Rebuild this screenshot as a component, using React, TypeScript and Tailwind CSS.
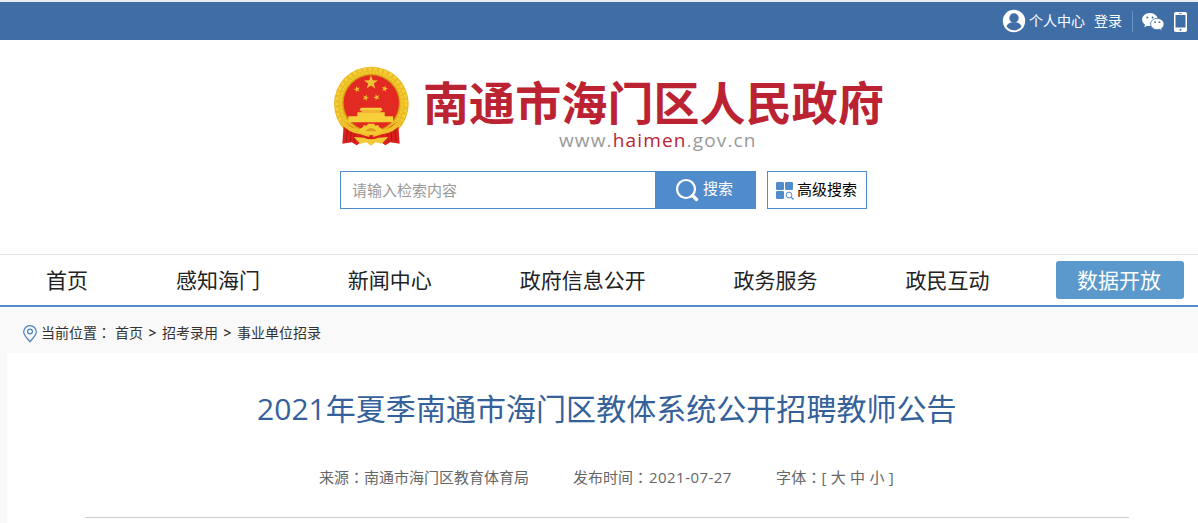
const navItems = ["首页", "感知海门", "新闻中心", "政府信息公开", "政务服务", "政民互动"];

const crumbs = ["首页", "招考录用", "事业单位招录"];

const STAR = "0,-10 2.4,-3.2 9.5,-3.1 3.8,1.2 5.9,8.1 0,4 -5.9,8.1 -3.8,1.2 -9.5,-3.1 -2.4,-3.2";

const smallStars = [
  { x: 96, y: 94, r: -15 },
  { x: 179, y: 92, r: 15 },
  { x: 122, y: 119, r: 20 },
  { x: 155, y: 118, r: -20 },
];

function Emblem() {
  return (
    <svg viewBox="24 24 228 240" className="h-20 w-[76px] shrink-0" aria-hidden="true">
      {/* Wheat ring */}
      <circle cx="139" cy="138" r="112" fill="#e8b81e" />
      <circle cx="139" cy="137" r="104" fill="none" stroke="#f3cd3a" strokeWidth="10" strokeDasharray="11 5" />
      <circle cx="139" cy="136" r="93" fill="none" stroke="#f1c930" strokeWidth="7" strokeDasharray="8 3" />
      <circle cx="139" cy="135" r="86" fill="#cf9414" />
      <circle cx="139" cy="135" r="83" fill="#e32a22" />
      {/* Stars */}
      <polygon points={STAR} fill="#f0c435" transform="translate(138 74) scale(2.2)" />
      {smallStars.map((s) => (
        <polygon
          key={s.x}
          points={STAR}
          fill="#efbd30"
          transform={`translate(${s.x} ${s.y}) rotate(${s.r})`}
        />
      ))}
      {/* Gate */}
      <path d="M108 149h61l4 9H103z" fill="#f7d23c" />
      <path d="M110 158h57v5h-57z" fill="#f2b632" />
      <path d="M97 163h82v12h25v18H70v-18h27z" fill="#f7cf3a" />
      {/* Ribbons */}
      <path d="M57 190l41 28 40 14 40-14 41-28 5 67-28-4-15 9-22-16h-42l-22 16-15-9-28 4z" fill="#dc201c" />
      <path d="M68 212l-4 38M79 218l-3 32M90 224l-2 26M209 212l4 38M198 218l3 32M187 224l2 26" stroke="#b21318" strokeWidth="3" />
      {/* Crossed wheat stems */}
      <path d="M48 186q24 34 62 37l24 8M229 186q-24 34-62 37l-24 8" fill="none" stroke="#edc02b" strokeWidth="13" />
      {/* Gear */}
      <path d="M102 219q3-9 12-12l2-6 9 2 4-6h18l4 6 9-2 2 6q9 3 12 12l-14 9h-44z" fill="#f4cb33" />
      <path d="M120 220q18-20 36 0z" fill="#d99b1b" />
      <path d="M104 230q34 16 68 0-12 17-34 17t-34-17z" fill="#dc201c" />
      <path d="M86 237l30 2q22 10 44 0l30-2-20 20-18-4-14 10-14-10-18 4z" fill="#f2cb36" />
    </svg>
  );
}

function UserIcon() {
  return (
    <svg viewBox="0 0 24 24" className="size-6" aria-hidden="true">
      <circle cx="12" cy="12" r="11.2" fill="#fff" />
      <circle cx="12" cy="9" r="4.7" fill="#3f6ea6" />
      <path d="M4.500 17.600c.8-2.800 3.400-4 5.300-4.300h4.400c1.900.3 4.500 1.500 5.300 4.300-1.800 2.300-4.500 3.700-7.500 3.700s-5.700-1.400-7.500-3.700z" fill="#3f6ea6" />
    </svg>
  );
}

function WechatIcon() {
  return (
    <svg viewBox="0 0 24 20" className="h-5 w-6" aria-hidden="true">
      <path d="M9 1C4.600 1 1.100 3.900 1.100 7.600c0 2.100 1.100 3.900 3 5.100l-.9 2.600 3-1.600c.9.3 1.800.4 2.800.4 4.400 0 7.800-2.900 7.800-6.500S13.400 1 9 1z" fill="#fff" />
      <path d="M16.300 6.400c-3.900 0-6.700 2.500-6.700 5.600s2.800 5.600 6.700 5.600c.8 0 1.600-.1 2.300-.3l2.600 1.500-.7-2.300c1.500-1 2.500-2.600 2.500-4.500 0-3.100-2.900-5.600-6.700-5.600z" fill="#fff" stroke="#3f6ea6" strokeWidth=".8" />
      <g fill="#3f6ea6">
        <circle cx="6.300" cy="5.400" r="1" />
        <circle cx="11.600" cy="5.400" r="1" />
        <circle cx="14" cy="10.200" r=".9" />
        <circle cx="18.500" cy="10.200" r=".9" />
      </g>
    </svg>
  );
}

function PhoneIcon() {
  return (
    <svg viewBox="0 0 13 20" className="h-5 w-[13px]" aria-hidden="true">
      <rect width="13" height="20" rx="1.800" fill="#fff" />
      <path d="M1.500 3h10v12.500h-10z" fill="#3f6ea6" />
      <path d="M5 1.500h3" stroke="#3f6ea6" strokeWidth=".7" />
      <circle cx="6.500" cy="17.800" r="1" fill="#3f6ea6" />
    </svg>
  );
}

function SearchIcon() {
  return (
    <svg viewBox="0 0 24 24" className="size-6" fill="none" stroke="#fff" aria-hidden="true">
      <circle cx="11" cy="11" r="9" strokeWidth="2.200" />
      <path d="M17.500 17.500l4 4" strokeWidth="3.400" strokeLinecap="round" />
    </svg>
  );
}

function AdvancedIcon() {
  return (
    <svg viewBox="0 0 18 18" className="mt-0.5 size-[18px]" aria-hidden="true">
      <g fill="#508bcb">
        <rect width="8" height="8" rx="1.200" />
        <rect x="9" width="8" height="8" rx="1.200" />
        <rect y="9" width="8" height="8" rx="1.200" />
      </g>
      <g fill="none" stroke="#508bcb">
        <circle cx="13" cy="13" r="2.900" />
        <path d="M15.200 15.200l2.300 2.300" strokeWidth="1.300" />
      </g>
    </svg>
  );
}

function PinIcon() {
  return (
    <svg viewBox="0 0 14 18" className="mt-px h-[18px] w-3.5" fill="none" stroke="#4a80bd" strokeWidth="1.200" aria-hidden="true">
      <path d="M7 16.800C5.400 14.300.7 10.700.7 7a6.300 6.300 0 0 1 12.600 0c0 3.700-4.700 7.300-6.300 9.800z" />
      <circle cx="7" cy="6.500" r="2.400" />
    </svg>
  );
}

// The TC face centres the full-width colon
function Colon() {
  return (
    <span lang="zh-TW" className="font-['Noto_Sans_CJK_TC',sans-serif] leading-none">
      ：
    </span>
  );
}

export default function App() {
  return (
    <div className="h-[523px] w-[1198px] overflow-hidden bg-white font-['Open_Sans','Noto_Sans_CJK_SC',sans-serif] whitespace-nowrap">
      {/* Top bar */}
      <div className="flex h-10 items-center border-t-2 border-[#e9eef3] bg-[#3f6ea6] pl-[1002px] text-sm text-white">
        <UserIcon />
        <span className="ml-[3px]">个人中心</span>
        <span className="ml-[9px]">登录</span>
        <span className="ml-[10px] h-[21px] w-px bg-[#6792c4]" />
        <span className="ml-2 pt-0.5">
          <WechatIcon />
        </span>
        <span className="ml-[9px] pt-0.5">
          <PhoneIcon />
        </span>
      </div>

      <header className="h-[214px] pt-[26px]">
        <div className="flex h-[105px] pl-[333px]">
          <Emblem />
          <div className="ml-[14px]">
            <h1 className="mt-[13px] text-[46px] leading-[46px] font-bold tracking-[0.1px] text-[#bb2232]">
              南通市海门区人民政府
            </h1>
            <p className="mt-[3px] ml-[136px] text-[19px] leading-[24px] tracking-[1.15px] text-[#999]">
              www.<span className="text-[#bb2232]">haimen</span>.gov.cn
            </p>
          </div>
        </div>
        <div className="flex h-[38px] pl-[340px] text-[15px]">
          <div className="flex w-[315px] items-center border border-r-0 border-[#508bcb] pl-[11px] text-[#999]">
            请输入检索内容
          </div>
          <button className="flex w-[101px] items-center bg-[#508bcb] pl-5 text-white">
            <SearchIcon />
            <span className="-mt-[3px] ml-1">搜索</span>
          </button>
          <button className="ml-[11px] flex w-[100px] items-center border border-[#508bcb] pl-2 text-black">
            <AdvancedIcon />
            <span className="-mt-0.5 ml-[3px]">高级搜索</span>
          </button>
        </div>
      </header>

      <nav className="flex h-[53px] items-center gap-[87.9px] border-t border-b-2 border-t-[#e1e6eb] border-b-[#508bcb] pl-[46px] text-[21px] text-[#222]">
        {navItems.map((item) => (
          <a key={item} className="pt-0.5">
            {item}
          </a>
        ))}
        <a className="-ml-[21.4px] flex h-[38px] w-32 items-center rounded-[3px] bg-[#5b98cb] pt-0.5 pl-[21px] text-white">
          数据开放
        </a>
      </nav>

      {/* Breadcrumb */}
      <div className="flex h-[46px] items-center bg-[#f9f9f9] pt-[7px] pl-[23px] text-sm text-[#333]">
        <PinIcon />
        <div className="-mt-0.5 ml-1 flex items-center">
          <span className="mr-1">
            当前位置
            <Colon />
          </span>
          {crumbs.map((crumb, i) => (
            <span key={crumb} className="flex">
              {i > 0 && <span className="w-[19px] text-center font-semibold">&gt;</span>}
              {crumb}
            </span>
          ))}
        </div>
      </div>

      <main className="h-[170px] border-l-[7px] border-[#f9f9f9] pt-[33px]">
        <h2 className="pl-[250px] text-[30px] leading-[46px] tracking-[0.04px] text-[#35619b]">
          2021年夏季南通市海门区教体系统公开招聘教师公告
        </h2>
        <div className="mr-[69px] ml-[78px] flex h-[86px] border-b border-[#ccc] pt-[33px] pl-[234px] text-[15px] leading-6 text-[#666]">
          <span className="w-[254px]">
            来源
            <Colon />
            南通市海门区教育体育局
          </span>
          <span className="w-[203px]">
            发布时间
            <Colon />
            <span className="ml-px tracking-[0.45px]">2021-07-27</span>
          </span>
          <span className="tracking-[0.2px]">
            字体
            <Colon />[ 大 中 小 ]
          </span>
        </div>
      </main>
    </div>
  );
}
